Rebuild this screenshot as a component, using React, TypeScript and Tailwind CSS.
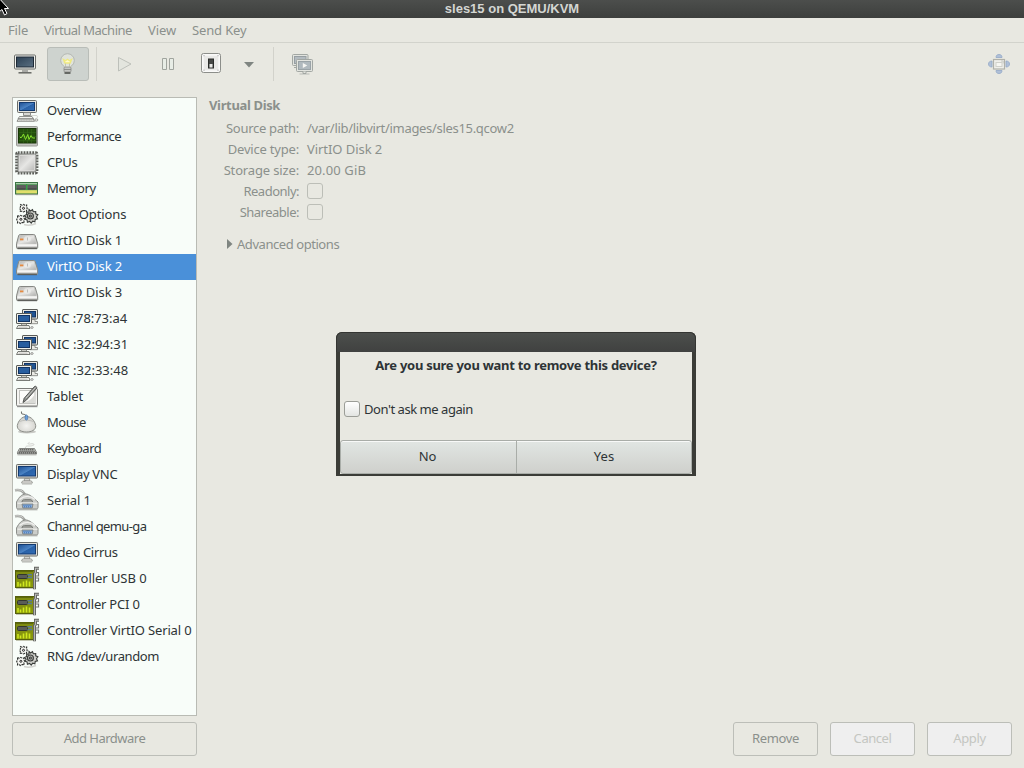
import type { ReactNode } from "react";

type IconProps = { children: ReactNode };

function Icon({ children }: IconProps) {
  return (
    <svg width="24" height="24" viewBox="0 0 24 24" className="shrink-0" overflow="visible">
      {children}
    </svg>
  );
}

function Defs() {
  return (
    <svg width="0" height="0" className="absolute">
      <defs>
        <linearGradient id="screen" x1="0" y1="0" x2="1" y2="1">
          <stop offset="0" stopColor="#1d4f93" />
          <stop offset="0.5" stopColor="#4a83c4" />
          <stop offset="0.55" stopColor="#2a62a8" />
          <stop offset="1" stopColor="#2f6cb5" />
        </linearGradient>
        <linearGradient id="metal" x1="0" y1="0" x2="1" y2="1">
          <stop offset="0" stopColor="#b4b4b2" />
          <stop offset="0.5" stopColor="#e6e6e4" />
          <stop offset="1" stopColor="#b0b0ae" />
        </linearGradient>
        <linearGradient id="slate" x1="0" y1="0" x2="1" y2="1">
          <stop offset="0" stopColor="#2d4154" />
          <stop offset="1" stopColor="#5b7082" />
        </linearGradient>
        <linearGradient id="board" x1="0" y1="0" x2="0" y2="1">
          <stop offset="0" stopColor="#7d8a12" />
          <stop offset="1" stopColor="#8a9a0c" />
        </linearGradient>
        <radialGradient id="ball" cx="0.5" cy="0.6" r="0.6">
          <stop offset="0" stopColor="#f4f4f1" />
          <stop offset="1" stopColor="#cfcfca" />
        </radialGradient>
      </defs>
    </svg>
  );
}

const computer = (
  <Icon>
    <rect x="2.5" y="1.5" width="19" height="12" rx="1" fill="#e3e3df" stroke="#6a6c68" />
    <rect x="4.5" y="3.5" width="15" height="8" fill="url(#screen)" stroke="#143b70" />
    <path d="M8.500 13.500h7v3h-7z" fill="#d8d8d4" stroke="#777975" strokeWidth=".8" />
    <path d="M4.500 17.500h12.500l1.500 2.300H3z" fill="#f2f2ee" stroke="#777975" strokeWidth=".8" />
    <path d="M3.300 20h15l1.200 2.300H2z" fill="#ecece8" stroke="#777975" strokeWidth=".8" />
    <path d="M4.500 21h12.500" stroke="#a5a7a2" strokeDasharray="1 .6" />
    <ellipse cx="21.300" cy="21" rx="1.600" ry="1.100" fill="#fafaf8" stroke="#85857f" strokeWidth=".8" />
    <path d="M16 16.500h5c2 0 2 1.500.5 2.800" fill="none" stroke="#c5c5c0" strokeWidth=".7" />
  </Icon>
);

const performance = (
  <Icon>
    <rect x="1.500" y="1.500" width="21" height="19.500" rx="1" fill="#c3c5c0" stroke="#9a9c97" />
    <rect x="3.500" y="3.500" width="17.500" height="14.500" fill="#24500d" stroke="#183708" />
    <path d="M4 7.500h17M4 11.500h17M4 15.500h17M8.500 4v14M12.500 4v14M16.500 4v14" stroke="#34691a" strokeWidth=".6" />
    <path d="M5 12.500h1.500l2-3.500 2 5.500 2.300-5 1.200 5 2-4 1.500 2.500H20" fill="none" stroke="#86e02c" strokeWidth="1" />
  </Icon>
);

const cpu = (
  <Icon>
    <rect x="1.800" y="1.800" width="20" height="20" rx="1" fill="none" stroke="#5d5f5a" strokeWidth="3.200" strokeDasharray="1.800 1.100" />
    <rect x="3" y="3" width="18" height="18" rx="1.500" fill="url(#metal)" stroke="#7f817d" />
    <rect x="4.500" y="4.500" width="15" height="15" rx=".5" fill="none" stroke="#dededc" strokeWidth=".8" />
  </Icon>
);

const memory = (
  <Icon>
    <rect x="0.500" y="5.500" width="22" height="11.500" fill="#5b9e62" stroke="#3c7444" />
    <path d="M1 6.500h21" stroke="#a8cda9" />
    <rect x="1.500" y="8" width="9.500" height="4.500" fill="#5e5f5e" />
    <rect x="12.500" y="8" width="9.500" height="4.500" fill="#5e5f5e" />
    <path d="M1.500 12h9M12.500 12h9" stroke="#3d3f3d" />
    <path d="M11.750 7v8" stroke="#28a03c" />
    <path d="M1.500 14.800h20.500" stroke="#cfd04c" strokeWidth="3" />
    <path d="M1.500 14.800h20.500" stroke="#f2ef8a" strokeWidth="3" strokeDasharray="1 1" />
    <path d="M1 17.700h22" stroke="#8c8e84" strokeWidth=".8" />
  </Icon>
);

const gears = (
  <Icon>
    <path d="M9 21.500c4 1.300 8 .8 12-1" fill="none" stroke="#d2d3cf" strokeWidth="1.500" />
    <g stroke="#3b3e3b" strokeWidth="1.100">
      <path
        d="M14 6.500l1.500 1.500 2-1.300.8 2 2.400-.2v2.300l2.200 1-1.400 1.900 1 2.200-2.300.5-.3 2.400-2.200-.6-1.500 1.900-1.600-1.700-2.200.9-.3-2.300-2.200-.7 1.200-2-1.400-1.800 2-1-.1-2.300 2.300.1z"
        fill="#cfd0cb"
      />
      <circle cx="15.400" cy="13" r="3" fill="#b2b3ae" />
      <circle cx="15.400" cy="13" r="1" fill="#f5f5f2" />
    </g>
    <g fill="#f4f5f1" stroke="#2f322f" strokeDasharray="2.200 .8" strokeWidth="1.100">
      <path d="M5.500 1.500l1.500.7 1.500-.8 1.400.8 1.800-.2-.1 1.800.6 1.500-.7 1.300.2 1.700-1.800-.1-1.500.7-1.400-.7-1.700.2.100-1.600-.7-1.500.8-1.600z" />
      <path d="M2.500 12.500l1.700.7 1.500-.9 1.500.9 1.900-.2-.1 1.800.7 1.600-.8 1.500.3 1.800-1.900-.1-1.600.9-1.500-.8-1.700.200.100-1.700-.9-1.700.9-1.700z" />
    </g>
    <circle cx="8.500" cy="5.300" r="1" fill="#fff" stroke="#222" />
    <circle cx="5.900" cy="16.300" r="1" fill="#fff" stroke="#222" />
  </Icon>
);

const disk = (
  <Icon>
    <path d="M5.200 5.500h13.500c.8 0 1.200.4 1.500 1l2.500 8.300v3.700c0 .6-.4 1-1 1H2.500c-.6 0-1-.4-1-1v-3.700l2.200-8.300c.3-.6.700-1 1.500-1z" fill="#cbccc8" stroke="#858783" />
    <path d="M5.500 6.300h13l2.700 8.500H2.800z" fill="url(#metal)" />
    <path d="M2.300 15.200h19.700v2.300H2.300z" fill="#f5f5f4" />
    <path d="M2.300 18.400h19.700" stroke="#8d8f8b" />
    <path d="M2.500 19.700h19.500" stroke="#4f514e" strokeWidth=".9" />
    <ellipse cx="12.500" cy="10" rx="3.500" ry="3" fill="#f0f0ee" opacity=".6" />
    <path d="M12.500 8.500v3" stroke="#bcbcb9" />
    <rect x="5" y="9.500" width="3.400" height="1.800" fill="#e58a40" />
  </Icon>
);

const network = (
  <Icon>
    <rect x="7.500" y="2.500" width="15" height="9.500" rx=".5" fill="#e8e8e2" stroke="#5a5c58" />
    <rect x="9.500" y="4.500" width="11" height="5.500" fill="#205493" stroke="#123463" />
    <path d="M15 12.500h5v2h2.500v2.200H15z" fill="#ebebe5" stroke="#777975" strokeWidth=".8" />
    <rect x="1.500" y="6.500" width="15" height="10" rx=".5" fill="#efefe9" stroke="#5a5c58" />
    <rect x="3.500" y="8.500" width="11" height="6" fill="#285e9f" stroke="#123463" />
    <path d="M6.500 16.500h5v2h-5z" fill="#c8c8c2" stroke="#5f615d" strokeWidth=".7" />
    <path d="M3 18.500h11l1 3H1.500z" fill="#f3f3ee" stroke="#6b6d69" strokeWidth=".9" />
    <path d="M3.500 20.200h9" stroke="#aaa" strokeWidth=".7" />
    <ellipse cx="17" cy="20.500" rx="1.200" ry=".9" fill="#efefe9" stroke="#777" strokeWidth=".7" />
  </Icon>
);

const tablet = (
  <Icon>
    <rect x="1.500" y="3.500" width="21" height="17.500" rx="1.200" fill="#f5f5f2" stroke="#7c7e7a" />
    <rect x="4.500" y="5.500" width="15.500" height="13" fill="#fcfcfa" stroke="#c2c3bf" />
    <path d="M6.500 18c5-2 8-1 13-8v8z" fill="#d9dad6" />
    <path d="M8 17.500l1.200-4.300L19.500 1.500c1.200-.8 2.800.6 2 2L11.500 15z" fill="#8a8c89" stroke="#4a4c49" strokeWidth=".9" />
    <path d="M10.800 13.200L20.500 2.500" stroke="#c9cac6" />
    <path d="M2 21.700h20.500" stroke="#777" strokeWidth=".8" />
  </Icon>
);

const mouse = (
  <Icon>
    <path d="M11.300 7c0-3-.5-3.500-2.500-3.700C6.500 3.300 6.300 2 6.500.5" fill="none" stroke="#6f716d" strokeWidth="1.100" />
    <ellipse cx="12" cy="20.800" rx="9" ry="1.700" fill="#c9cac6" />
    <path d="M11.500 5.500c5 0 8.200 4.500 9.200 9 .4 4.700-4.500 6.500-9.200 6.500S1.900 19.200 2.300 14.500c1-4.500 4.200-9 9.200-9z" fill="url(#ball)" stroke="#8d8f8a" />
    <path d="M4.500 10.500c4-1.700 10-1.700 14 0" fill="none" stroke="#b8b9b5" strokeWidth=".8" />
    <ellipse cx="11.400" cy="6.500" rx="1.400" ry="2.600" fill="#6aa0db" stroke="#3f70aa" strokeWidth=".7" />
  </Icon>
);

const keyboard = (
  <Icon>
    <path d="M10.500 11c0-3 3-1.500 6-2.200 4-.8 3-2.600-1-1.900-3 .7-3-.7-1-1.500" fill="none" stroke="#d2d3cf" />
    <path d="M4.500 11.500h15l2 3.800v1.700H2.500v-1.700z" fill="#c5c6c2" stroke="#777975" strokeWidth=".9" />
    <path d="M5 12.700h14M4.300 14.300h15.500M3.500 15.900h17.500" stroke="#484a47" strokeWidth="1.100" strokeDasharray="1.500 .5" />
    <path d="M2.500 17.900h19" stroke="#b5b6b2" />
  </Icon>
);

const display = (
  <Icon>
    <rect x="1.500" y="1.500" width="21" height="13.500" rx=".8" fill="#dfdfda" stroke="#6a6c68" />
    <rect x="3.500" y="3.500" width="17" height="9.500" fill="url(#screen)" stroke="#143b70" />
    <path d="M9.500 15.500h5l.3 2.500h-5.600z" fill="#d4d4d0" stroke="#81837e" strokeWidth=".7" />
    <path d="M7.500 18h9l1 2H6.500z" fill="#f2f2ee" stroke="#8a8c87" strokeWidth=".8" />
    <path d="M7 21h10" stroke="#b0b1ad" />
  </Icon>
);

const serial = (
  <Icon>
    <path d="M0 1.200c4-.6 7 0 8.500 2.300l1.500 2" fill="none" stroke="#9fa19d" strokeWidth="2.400" />
    <path d="M0 1c4-.6 7 0 8.500 2.300" fill="none" stroke="#d2d3d0" strokeWidth="1" />
    <path d="M1.500 13c3-5.500 5-7.500 9-8 4-.2 8 4 12.500 8v5.500c0 1-.8 1.500-1.800 1.500H3.200c-1 0-1.700-.5-1.700-1.500z" fill="#cbcdc9" stroke="#8c8e8a" />
    <path d="M4.500 10.500c5-4 11-4 15.500 0" fill="none" stroke="#f0f0ee" strokeWidth="1.500" />
    <path d="M7 13c0-1.500 1-2.300 2.500-2.300H15c1.500 0 2.500.8 2.500 2.300" fill="#9fa19d" stroke="#73757100" />
    <path d="M7 13c0-1.500 1-2.300 2.500-2.300H15c1.500 0 2.500.8 2.500 2.300" fill="none" stroke="#737571" />
    <path d="M2.500 14.200h20" stroke="#f3f3f1" />
    <path d="M7 15h11l-.8 4H7.800z" fill="#86abd8" stroke="#7c7e7a" strokeWidth=".8" />
    <path d="M8.500 16.300h8M9 17.800h7" stroke="#4374b4" strokeDasharray="1 1" />
    <path d="M2 20.800h20.500" stroke="#a5a7a2" />
  </Icon>
);

const controller = (
  <Icon>
    <rect x="0.500" y="3.500" width="19" height="17" fill="url(#board)" stroke="#56600c" />
    <path d="M1 4.500h17" stroke="#5e690c" />
    <rect x="2.500" y="7.500" width="10" height="4" rx="1" fill="#5a5d58" stroke="#33362f" />
    <path d="M12.500 7.800h4.500M12.500 10.500h4.500" stroke="#56799a" strokeWidth="1.500" />
    <path d="M3 19.500V15M5.500 19.500v-3M8.500 19.500v-5M11.500 19.500v-6M14.500 19.500v-5" stroke="#cfe81f" strokeWidth="1.600" />
    <path d="M24 1.300h-3.500v4l-1 1.500v15.500" fill="none" stroke="#636561" strokeWidth="3" />
    <path d="M24 1.300h-3.500v4l-1 1.500v15.500" fill="none" stroke="#b9bab6" strokeWidth="1.100" />
    <path d="M21 5.500h2.500V9H21M21 11h2.500v3H21" fill="none" stroke="#747672" strokeWidth="1.200" />
    <path d="M1 21.500h17" stroke="#b5b8a0" strokeWidth=".8" />
  </Icon>
);

type Hardware = { label: string; icon: ReactNode; tracking: string; selected?: boolean };

const hardware: Hardware[] = [
  { label: "Overview", icon: computer, tracking: "tracking-[-0.27px]" },
  { label: "Performance", icon: performance, tracking: "tracking-[-0.47px]" },
  { label: "CPUs", icon: cpu, tracking: "tracking-[-0.4px]" },
  { label: "Memory", icon: memory, tracking: "tracking-[-0.4px]" },
  { label: "Boot Options", icon: gears, tracking: "tracking-[-0.1px]" },
  { label: "VirtIO Disk 1", icon: disk, tracking: "tracking-[-0.06px]" },
  { label: "VirtIO Disk 2", icon: disk, tracking: "tracking-[-0.06px]", selected: true },
  { label: "VirtIO Disk 3", icon: disk, tracking: "tracking-[-0.06px]" },
  { label: "NIC :78:73:a4", icon: network, tracking: "tracking-[-0.06px]" },
  { label: "NIC :32:94:31", icon: network, tracking: "tracking-[0.02px]" },
  { label: "NIC :32:33:48", icon: network, tracking: "tracking-[0.02px]" },
  { label: "Tablet", icon: tablet, tracking: "tracking-[-0.15px]" },
  { label: "Mouse", icon: mouse, tracking: "tracking-[-0.45px]" },
  { label: "Keyboard", icon: keyboard, tracking: "tracking-[-0.45px]" },
  { label: "Display VNC", icon: display, tracking: "tracking-[-0.3px]" },
  { label: "Serial 1", icon: serial, tracking: "tracking-[-0.1px]" },
  { label: "Channel qemu-ga", icon: serial, tracking: "tracking-[-0.62px]" },
  { label: "Video Cirrus", icon: display, tracking: "tracking-[-0.3px]" },
  { label: "Controller USB 0", icon: controller, tracking: "tracking-[-0.06px]" },
  { label: "Controller PCI 0", icon: controller, tracking: "tracking-[-0.2px]" },
  { label: "Controller VirtIO Serial 0", icon: controller, tracking: "tracking-[-0.15px]" },
  { label: "RNG /dev/urandom", icon: gears, tracking: "tracking-[-0.42px]" },
];

function Toolbar() {
  return (
    <div className="flex h-[43px] shrink-0 items-start pt-1">
      <svg width="24" height="24" viewBox="0 0 24 24" className="mt-[6px] ml-[13px]">
        <rect x="1.500" y="2" width="21" height="14" rx="1" fill="#f0f1ed" stroke="#6a6c69" />
        <rect x="3.500" y="4" width="17" height="10" fill="url(#slate)" stroke="#1e2a36" />
        <path d="M9 16.500h6V19H9z" fill="#aaaba7" />
        <path d="M5.500 19.800h13" stroke="#666864" strokeWidth="1.500" />
      </svg>
      <div className="ml-[10px] flex h-[34px] w-[42px] items-center justify-center rounded-[3px] border border-[#b9bdb8] bg-[#ced3cf]">
        <svg width="24" height="24" viewBox="0 0 24 24">
          <circle cx="11.500" cy="8.500" r="6.800" fill="#e0e3db" stroke="#b4b8b3" />
          <path d="M8.500 13.500h6v3h-6z" fill="#e4e6df" />
          <path d="M7.500 7.500l2 1.300 2-1.500 2 1.500 2-1.300-1.300 3.500H8.800z" fill="#fdfbd0" stroke="#efe97e" strokeWidth="1.300" />
          <path d="M9.500 11.500v3M13.500 11.500v3" stroke="#c3c4b0" />
          <rect x="8" y="15" width="7" height="5" rx="1" fill="#c5c7c4" stroke="#8a8c88" strokeWidth=".8" />
          <path d="M8 17.500h7" stroke="#858783" strokeWidth=".8" />
          <path d="M8.500 21h6" stroke="#5c5e5b" strokeWidth="1.800" />
        </svg>
      </div>
      <div className="ml-[7px] h-[34px] w-px bg-[#d2d2cb]" />
      <svg width="20" height="20" viewBox="0 0 20 20" className="mt-[7px] ml-[17px]">
        <path d="M4.500 3.500v13.500l12.500-7z" fill="#e3e5de" stroke="#bdc0ba" strokeLinejoin="round" />
      </svg>
      <svg width="20" height="20" viewBox="0 0 20 20" className="mt-[7px] ml-[24px]">
        <path d="M4.500 4.500h4v11h-4zM11.500 4.500h4v11h-4z" fill="#e8ede6" stroke="#a0a49e" />
      </svg>
      <svg width="22" height="22" viewBox="0 0 22 22" className="mt-[5px] ml-[22px]">
        <rect x="1.500" y="1.500" width="19" height="19" rx="2" fill="#f4f4f2" stroke="#8c8e8a" />
        <rect x="3" y="3" width="16" height="16" rx="1" fill="#e9e9e7" stroke="#fff" />
        <rect x="8.500" y="7" width="5" height="9" fill="#454745" stroke="#2a2c2a" />
        <path d="M9.500 12h3v3.500h-3z" fill="#e8e8e6" />
        <path d="M3.500 3.700h1M17.500 3.700h1M3.500 18.200h1M17.500 18.200h1" stroke="#999" />
      </svg>
      <svg width="12" height="8" viewBox="0 0 12 8" className="mt-[14px] ml-[21px]">
        <path d="M1 1h10L6 6.500z" fill="#7f8581" />
      </svg>
      <div className="ml-[18px] h-[34px] w-px bg-[#d2d2cb]" />
      <svg width="24" height="24" viewBox="0 0 24 24" className="mt-[6px] ml-[17px]">
        <g fill="#e2e4df" stroke="#a2a7a3">
          <rect x="1.500" y="1.500" width="15.500" height="11" rx="1" />
          <rect x="3.500" y="3.500" width="11.500" height="7" fill="#b3bbc0" stroke="#979fa3" />
          <path d="M3 14.500h3" />
          <rect x="5.500" y="6.500" width="16" height="12" rx="1" />
          <rect x="7.500" y="8.500" width="12" height="8" fill="#b0b9be" stroke="#9aa3a7" />
          <path d="M8.500 21h10" stroke="#b8bbb7" />
          <path d="M12 18.500v2h3v-2" />
        </g>
        <path d="M11.800 10v5l4.500-2.500z" fill="#f5f5f2" />
      </svg>
      <svg width="24" height="24" viewBox="0 0 24 24" className="mt-[4px] mr-[13px] ml-auto">
        <g fill="#b0c0d7" stroke="#93a8c8" strokeWidth=".8">
          <path d="M9 6.500c0-2 1-3 3-3s3 1 3 3zM9 19.500c0 2 1 3 3 3s3-1 3-3zM5 10c-2 0-3.500 1-3.500 3s1.500 3 3.500 3zM19 10c2 0 3.500 1 3.500 3s-1.500 3-3.500 3z" />
        </g>
        <rect x="6.500" y="8.500" width="11" height="9.500" fill="#efefea" stroke="#b0b1aa" strokeWidth="1.200" />
        <rect x="9" y="11.500" width="6" height="4" fill="#f6f6f2" stroke="#d0d1cb" />
        <path d="M14 10h2.200v2.500" fill="none" stroke="#c8cac4" />
      </svg>
    </div>
  );
}

type FieldProps = { label: string; tracking: string; children: ReactNode };

function Field({ label, tracking, children }: FieldProps) {
  return (
    <div className="flex h-[21px] items-center">
      <div className="flex w-[90px] justify-end">
        <span className={tracking}>{label}</span>
      </div>
      <div className="ml-2">{children}</div>
    </div>
  );
}

function OffBox() {
  return <div className="h-4 w-4 rounded-[3px] border border-[#bcbeb7]" />;
}

function Pointer() {
  return (
    <svg width="12" height="16" viewBox="0 0 12 16" className="absolute top-0 left-0">
      <path d="M-3-4L8.500 8.500H4.500L7 13.500 4.500 15 2 9.500-1 12z" fill="#000" stroke="#fff" />
    </svg>
  );
}

function Dialog() {
  return (
    <div className="absolute top-[332px] left-[336px] h-[144px] w-[360px] rounded-t-[6px] bg-[#3b3c37] px-1 pb-[2px] text-[#2e3436]">
      <div className="-mx-1 h-5 rounded-t-[6px] border-x border-t border-[#343532] bg-linear-to-b from-[#4c4f4c] to-[#404140]" />
      <div className="flex h-[122px] flex-col bg-[#e8e8e1]">
        <div className="h-[28px] text-center text-[13px] leading-[27px] font-bold tracking-[-0.28px]">
          Are you sure you want to remove this device?
        </div>
        <div className="mt-[19px] flex h-[20px] items-center pl-1">
          <div className="h-4 w-4 rounded-[3px] border border-[#9b9d97] bg-linear-to-b from-white to-[#e3e5e2]" />
          <div className="ml-1 tracking-[-0.45px]">Don't ask me again</div>
        </div>
        <div className="mt-auto flex h-[34px] rounded-[3px] border border-[#a9ada8] bg-linear-to-b from-[#e1e6e3] to-[#cfd0cc] text-center leading-[31px] shadow-[inset_0_1px_0_#f8f9f8]">
          <div className="w-[176px] border-r border-[#a9ada8] pr-[2px]">No</div>
          <div className="flex-1">Yes</div>
        </div>
      </div>
    </div>
  );
}

export default function App() {
  return (
    <div className="relative flex h-[768px] w-[1024px] flex-col overflow-hidden bg-[#e8e8e1] font-['Noto_Sans','Open_Sans',sans-serif] text-[13px] leading-[20px] whitespace-nowrap text-[#8b908c]">
      <Defs />
      <header className="h-[18px] shrink-0 bg-linear-to-b from-[#4c4e4c] to-[#3d3f3d] text-center font-['Liberation_Sans',sans-serif] text-[13px] leading-[18px] font-bold text-[#d4d6d2]">
        sles15 on QEMU/KVM
      </header>
      <nav className="flex h-[25px] shrink-0 border-b border-[#d2d3cc] pl-2 leading-[24px]">
        <span className="w-9 tracking-[-0.15px]">File</span>
        <span className="w-[104px] tracking-[-0.5px]">Virtual Machine</span>
        <span className="w-[44px] tracking-[-0.1px]">View</span>
        <span className="tracking-[-0.15px]">Send Key</span>
      </nav>
      <Toolbar />
      <main className="flex min-h-0 flex-1 px-3 pt-[11px] pb-3">
        <aside className="flex w-[185px] flex-col">
          <ul className="h-[619px] border border-[#b9bbb4] bg-[#f8fdf9] text-[#2e3436]">
            {hardware.map((item) => (
              <li
                key={item.label}
                className={
                  item.selected
                    ? "flex h-[26px] items-center bg-[#4a90d9] pl-[2px] text-white"
                    : "flex h-[26px] items-center pl-[2px]"
                }
              >
                {item.icon}
                <span className="ml-2 pb-[2px]">
                  <span className={item.tracking}>{item.label}</span>
                </span>
              </li>
            ))}
          </ul>
          <button className="mt-[6px] h-[34px] rounded-[3px] border border-[#bcbeb8] pb-[2px] tracking-[-0.5px]">
            Add Hardware
          </button>
        </aside>
        <section className="ml-3 flex flex-1 flex-col">
          <h2 className="mt-[-2px] h-[22px] font-bold tracking-[-0.35px]">Virtual Disk</h2>
          <Field label="Source path:" tracking="tracking-[-0.3px]">
            <span className="tracking-[-0.31px]">/var/lib/libvirt/images/sles15.qcow2</span>
          </Field>
          <Field label="Device type:" tracking="tracking-[-0.2px]">
            <span className="tracking-[-0.06px]">VirtIO Disk 2</span>
          </Field>
          <Field label="Storage size:" tracking="tracking-[-0.15px]">
            <span className="tracking-[0.12px]">20.00 GiB</span>
          </Field>
          <Field label="Readonly:" tracking="tracking-[-0.5px]">
            <OffBox />
          </Field>
          <Field label="Shareable:" tracking="tracking-[-0.5px]">
            <OffBox />
          </Field>
          <div className="mt-[11px] flex h-[21px] items-center pl-[18px]">
            <svg width="6" height="10" viewBox="0 0 6 10" className="mr-1">
              <path d="M0 0v10l5.500-5z" fill="#7f8581" />
            </svg>
            <span className="tracking-[-0.44px]">Advanced options</span>
          </div>
          <footer className="mt-auto flex justify-end gap-3">
            <button className="h-[34px] w-[85px] rounded-[3px] border border-[#bcbeb8] pb-[2px] tracking-[-0.35px]">
              Remove
            </button>
            <button className="h-[34px] w-[85px] rounded-[3px] border border-[#bcbeb8] bg-[#efefef] pb-[2px] tracking-[-0.45px] text-[#c4c6c1]">
              Cancel
            </button>
            <button className="h-[34px] w-[85px] rounded-[3px] border border-[#bcbeb8] bg-[#efefef] pb-[2px] tracking-[-0.35px] text-[#c4c6c1]">
              Apply
            </button>
          </footer>
        </section>
      </main>
      <Dialog />
      <Pointer />
    </div>
  );
}
